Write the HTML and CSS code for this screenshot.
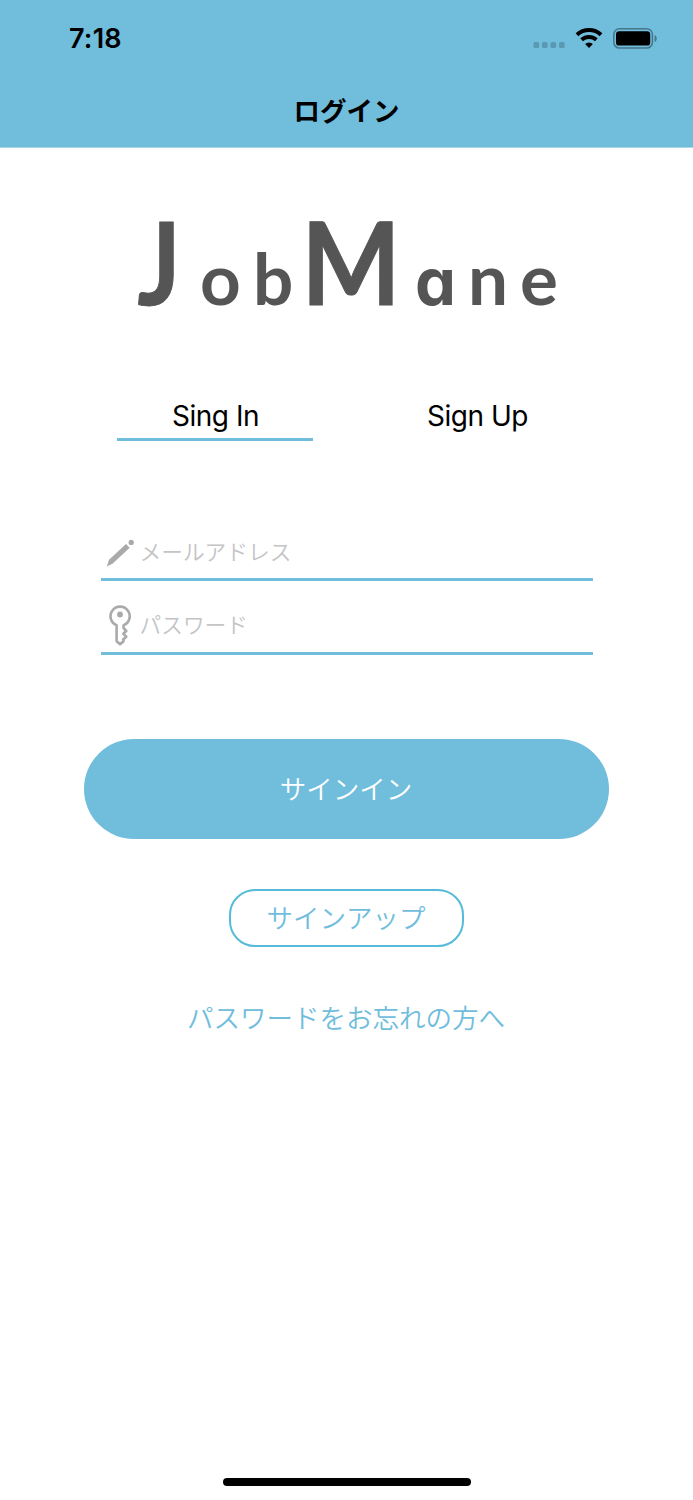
FILE: index.html
```html
<!DOCTYPE html>
<html lang="ja">

<head>
    <meta charset="UTF-8">
    <meta name="viewport" content="width=device-width, initial-scale=1.0">
    <title>ログイン</title>
    <link rel="stylesheet" href="styles.css">
</head>

<body>
    <header class="header">
        <div class="status_bar">
            <span class="time">7:18</span>
            <div class="status_icons">
                <svg class="signal" width="32" height="6" viewBox="0 0 32 6">
                    <rect x="0.500" width="5.6" height="6" rx="1.6" />
                    <rect x="9" width="5.6" height="6" rx="1.6" />
                    <rect x="17.500" width="5.6" height="6" rx="1.6" />
                    <rect x="26" width="5.6" height="6" rx="1.6" />
                </svg>
                <svg class="wifi" width="28" height="20" viewBox="0 0 28 20">
                    <path d="M2 6.800a17.500 17.500 0 0 1 24 0M6.600 11.800a11 11 0 0 1 14.800 0" />
                    <path class="wifi_dot" d="M14 20l-3.900-3.900a5.800 5.800 0 0 1 7.800 0z" />
                </svg>
                <svg class="battery" width="45" height="21" viewBox="0 0 45 21">
                    <rect class="battery_frame" x=".8" y=".8" width="38.6" height="19.2" rx="5.6" />
                    <rect x="3" y="3.200" width="34.2" height="14.4" rx="3.2" />
                    <path class="battery_tip" d="M41.600 7c2.800 1.400 2.800 5.800 0 7.200z" />
                </svg>
            </div>
        </div>
        <h1 class="title">ログイン</h1>
    </header>

    <main class="container">
        <svg class="logo" width="440" height="160" viewBox="0 0 440 160">
            <text class="logo_big" transform="translate(10.500 124) scale(.88 1)">J</text>
            <text x="73" y="124">o</text>
            <text x="126" y="124">b</text>
            <text class="logo_big" transform="translate(174.500 124) scale(.92 1)">M</text>
            <text class="logo_a" x="288" y="124">a</text>
            <text x="341" y="124">n</text>
            <text x="393" y="124">e</text>
        </svg>

        <nav class="tabs">
            <a class="tab active">Sing In</a>
            <a class="tab">Sign Up</a>
        </nav>

        <form class="form">
            <label class="field">
                <svg class="icon" width="38" height="42" viewBox="0 0 38 42">
                    <path class="icon_fill" d="M5.800 35.400l2.200-6.600L25 13l3.700 3.700L11.800 32.400z" />
                    <circle class="icon_fill" cx="30.200" cy="11.400" r="2.600" />
                </svg>
                <span class="placeholder">メールアドレス</span>
            </label>
            <label class="field">
                <svg class="icon" width="38" height="42" viewBox="0 0 38 42">
                    <path class="icon_line" d="M15.600 21.200a9.600 9.600 0 1 1 7 0v3l2.700 2.800-3 2.700 3 3-3.200 2.700.500 1.800-3.500 3-3.500-3z" />
                    <circle class="icon_fill" cx="19" cy="10.500" r="2.900" />
                </svg>
                <span class="placeholder">パスワード</span>
            </label>
        </form>

        <button class="btn signin">サインイン</button>
        <button class="btn signup">サインアップ</button>
        <a class="forgot">パスワードをお忘れの方へ</a>
    </main>

    <div class="home_bar"></div>
</body>

</html>
```
FILE: styles.css
```css
* {
    box-sizing: border-box;
}

body {
    margin: 0;
    height: 1500px;
    display: flex;
    flex-direction: column;
    align-items: center;
    background: #fff;
    color: #000;
    font-family: Inter, "Noto Sans CJK JP", sans-serif;
}

.header {
    width: 100%;
    height: 148px;
    background: #71bddc;
    border-bottom: 1px solid #a9d6e9;
}

.status_bar {
    height: 76px;
    padding: 0 35px 0 69px;
    display: flex;
    justify-content: space-between;
    align-items: center;
}

.time {
    padding-top: 1px;
    font-size: 27px;
    font-weight: 600;
    line-height: 32px;
    letter-spacing: 0.2px;
}

.status_icons {
    display: flex;
    align-items: center;
}

.signal {
    margin: 14px 10px 0 0;
    fill: #5b98b1;
}

.wifi {
    margin-right: 10px;
    fill: none;
    stroke: #000;
    stroke-width: 4;
}

.wifi_dot {
    fill: #000;
    stroke: none;
}

.battery_frame {
    fill: none;
    stroke: #467689;
    stroke-width: 1.5;
}

.battery_tip {
    fill: #467689;
}

.title {
    margin: 0;
    padding-top: 14px;
    text-align: center;
    font-family: "Noto Sans CJK JP", sans-serif;
    font-size: 26.5px;
    font-weight: 700;
    line-height: 40px;
}

.container {
    flex: 1;
    width: 525px;
    display: flex;
    flex-direction: column;
    align-items: center;
}

.logo {
    margin-top: 33px;
    fill: #555;
    font-family: Lato, sans-serif;
    font-weight: 700;
    font-size: 71px;
}

.logo_big {
    font-size: 114px;
    stroke: #555;
    stroke-width: 1;
}

.logo_a {
    font-family: Inter, sans-serif;
    font-size: 65px;
    font-feature-settings: "cv11";
}

.tabs {
    margin-top: 54px;
    padding-right: 1px;
    display: flex;
    gap: 66px;
}

.tab {
    width: 196px;
    height: 46px;
    padding-left: 1px;
    text-align: center;
    font-size: 28px;
    line-height: 42px;
    letter-spacing: -0.5px;
}

.tab.active {
    border-bottom: 3px solid #71bddc;
}

.form {
    width: 492px;
    margin-top: 81px;
}

.field {
    height: 74px;
    padding-bottom: 6px;
    display: flex;
    align-items: flex-end;
    border-bottom: 3px solid #71bddc;
}

.field:first-child {
    height: 59px;
    padding-bottom: 5px;
}

.icon_fill {
    fill: #aaa;
}

.icon_line {
    fill: none;
    stroke: #aaa;
    stroke-width: 2.6;
    stroke-linejoin: round;
}

.placeholder {
    padding-left: 1px;
    color: #c4c4c6;
    font-size: 21.7px;
    font-weight: 350;
    line-height: 42px;
}

.btn {
    font-family: "Noto Sans CJK JP", sans-serif;
    font-size: 26.5px;
    font-weight: 350;
    padding: 0 1px 4px 0;
}

.signin {
    width: 525px;
    height: 100px;
    margin-top: 84px;
    border: 0;
    border-radius: 50px;
    background: #71bddc;
    color: #fff;
}

.signup {
    width: 235px;
    height: 58px;
    margin-top: 50px;
    border: 2px solid #54bbd9;
    border-radius: 26px;
    background: #fff;
    color: #71bddc;
}

.forgot {
    margin-top: 51px;
    padding-right: 1px;
    color: #71bddc;
    font-size: 26.5px;
    font-weight: 350;
    line-height: 40px;
}

.home_bar {
    width: 248px;
    height: 8px;
    margin-bottom: 14px;
    border-radius: 4px;
    background: #000;
}
```
